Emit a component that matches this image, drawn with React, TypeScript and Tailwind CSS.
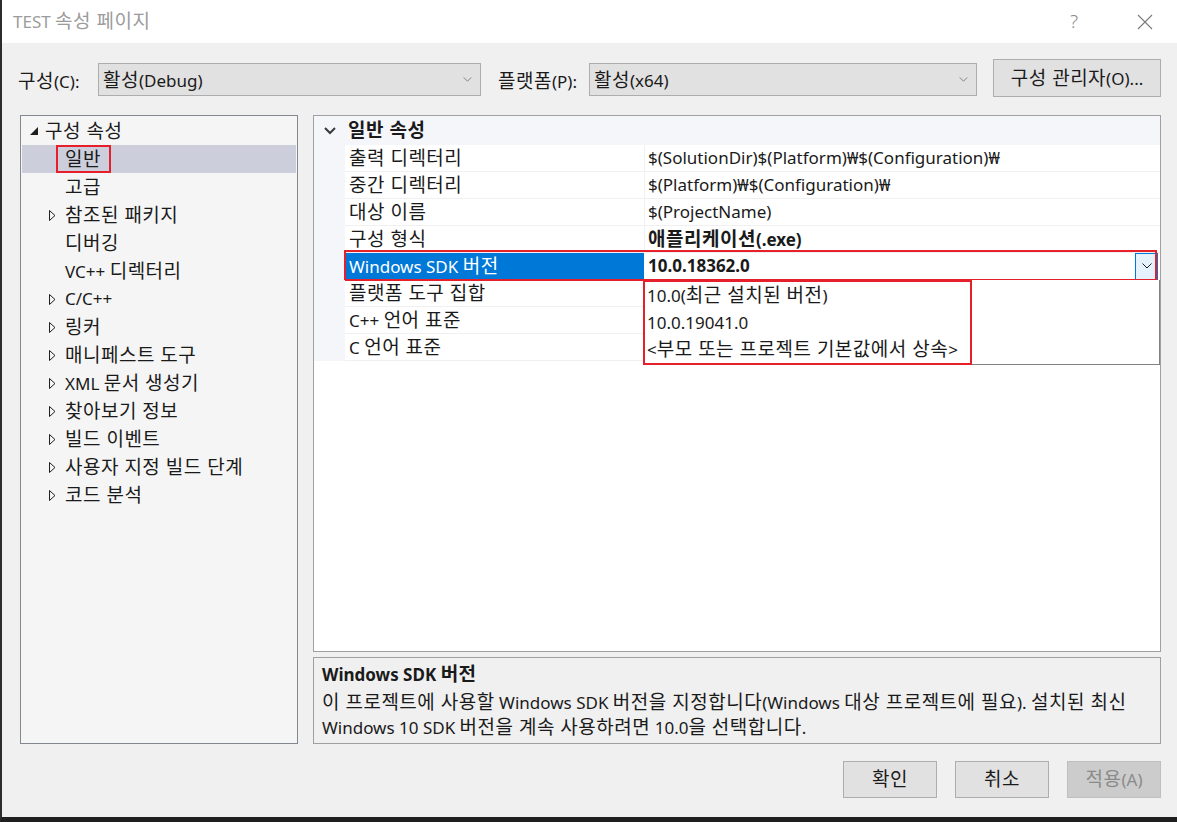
import React from 'react';

const FONT = "font-['Noto_Sans','Noto_Sans_CJK_KR',sans-serif]";

// Hangul runs are set a bit larger and looser so they take the width of the original UI font
const K = ({ t }: { t: string }) => (
  <span>
    {t.split(/([\uAC00-\uD7A3]+(?: [\uAC00-\uD7A3]+)*)/).map((part, i) =>
      /[\uAC00-\uD7A3]/.test(part) ? (
        <span key={i} className="text-[19px] tracking-[0.5px]">
          {part}
        </span>
      ) : (
        part
      )
    )}
  </span>
);

const Chevron = ({ className = '' }: { className?: string }) => (
  <svg viewBox="0 0 10 6" className={className} fill="none" stroke="currentColor" strokeWidth="1">
    <polyline points="0.5,0.5 5,5 9.5,0.5" />
  </svg>
);

const treeItems = [
  { label: '일반', arrow: false },
  { label: '고급', arrow: false },
  { label: '참조된 패키지', arrow: true },
  { label: '디버깅', arrow: false },
  { label: 'VC++ 디렉터리', arrow: false },
  { label: 'C/C++', arrow: true },
  { label: '링커', arrow: true },
  { label: '매니페스트 도구', arrow: true },
  { label: 'XML 문서 생성기', arrow: true },
  { label: '찾아보기 정보', arrow: true },
  { label: '빌드 이벤트', arrow: true },
  { label: '사용자 지정 빌드 단계', arrow: true },
  { label: '코드 분석', arrow: true },
];

const props = [
  { label: '출력 디렉터리', value: '$(SolutionDir)$(Platform)₩$(Configuration)₩', bold: false },
  { label: '중간 디렉터리', value: '$(Platform)₩$(Configuration)₩', bold: false },
  { label: '대상 이름', value: '$(ProjectName)', bold: false },
  { label: '구성 형식', value: '애플리케이션(.exe)', bold: true },
  { label: 'Windows SDK 버전', value: '10.0.18362.0', bold: true, selected: true },
  { label: '플랫폼 도구 집합', value: '', bold: false },
  { label: 'C++ 언어 표준', value: '', bold: false },
  { label: 'C 언어 표준', value: '', bold: false },
];

const options = ['10.0(최근 설치된 버전)', '10.0.19041.0', '<부모 또는 프로젝트 기본값에서 상속>'];

const Combo = ({ text, className }: { text: string; className: string }) => (
  <div className={`mt-[4px] flex h-[33px] items-center justify-between border border-[#adadad] bg-[#e1e1e1] pl-[4px] pr-[8px] ${className}`}>
    <span className="pt-[2px]">
      <K t={text} />
    </span>
    <Chevron className="h-[5px] w-[9px] text-[#707070]" />
  </div>
);

const TreeRow = ({ label, arrow, selected }: { label: string; arrow: boolean; selected?: boolean }) => (
  <div className={`mx-px flex h-[28px] items-center ${selected ? 'bg-[#cccedb]' : ''}`}>
    <div className="flex w-[43px] justify-end pr-[9px]">
      {arrow && (
        <svg viewBox="0 0 7 11" className="h-[11px] w-[7px]" fill="none" stroke="#1e1e1e" strokeWidth="1">
          <polygon points="0.5,0.5 6,5.5 0.5,10.5" />
        </svg>
      )}
    </div>
    {selected ? (
      <span className="ml-[-9px] flex h-[28px] items-center border-2 border-[#e5202b] pl-[7px] pr-[8px]">
        <K t={label} />
      </span>
    ) : (
      <K t={label} />
    )}
  </div>
);

const Button = ({ text, disabled }: { text: string; disabled?: boolean }) => (
  <div
    className={`flex h-[37px] w-[94px] items-center justify-center border ${
      disabled ? 'border-[#bfbfbf] bg-[#cccccc] text-[#8a8a8a]' : 'border-[#adadad] bg-[#e1e1e1] text-[#1a1a1a]'
    }`}
  >
    <K t={text} />
  </div>
);

export default function App() {
  return (
    <div className={`${FONT} flex h-[822px] w-[1177px] flex-col overflow-hidden border-b-[5px] border-l-2 border-b-[#1f1f1f] border-l-[#2d2d2d] bg-[#f0f0f0] text-[17px] text-[#1a1a1a]`}>
      {/* title bar */}
      <div className="flex h-[43px] shrink-0 items-center justify-between bg-white pl-[11px] pr-[24px]">
        <span className="text-[17px] text-[#9b9b9b]">
          <K t="TEST 속성 페이지" />
        </span>
        <div className="flex items-center gap-[59px] text-[#8a8a8a]">
          <span className="text-[19px] font-light">?</span>
          <svg viewBox="0 0 16 16" className="h-[16px] w-[16px]" stroke="#7a7a7a" strokeWidth="1.1">
            <line x1="1" y1="1" x2="15" y2="15" />
            <line x1="15" y1="1" x2="1" y2="15" />
          </svg>
        </div>
      </div>

      {/* config row */}
      <div className="mt-[16px] flex h-[38px] shrink-0 items-start pl-[16px] pr-[16px]">
        <span className="mt-[8px] w-[80px]">
          <K t="구성(C):" />
        </span>
        <Combo text="활성(Debug)" className="w-[383px]" />
        <span className="ml-[17px] mt-[8px] w-[91px]">
          <K t="플랫폼(P):" />
        </span>
        <Combo text="활성(x64)" className="w-[388px]" />
        <div className="ml-auto flex h-[38px] w-[168px] items-center justify-center border border-[#adadad] bg-[#e1e1e1]">
          <K t="구성 관리자(O)..." />
        </div>
      </div>

      {/* main */}
      <div className="mt-[18px] flex h-[629px] shrink-0 gap-[15px] pl-[18px] pr-[16px]">
        {/* tree */}
        <div className="w-[278px] border border-[#828790] bg-[#f5f5f5] pt-px">
          <div className="flex h-[28px] items-center">
            <div className="flex w-[24px] justify-end pr-[7px]">
              <svg viewBox="0 0 8 8" className="h-[8px] w-[8px]">
                <polygon points="8,0 8,8 0,8" fill="#1e1e1e" />
              </svg>
            </div>
            <K t="구성 속성" />
          </div>
          {treeItems.map((item, i) => (
            <TreeRow key={item.label} label={item.label} arrow={item.arrow} selected={i === 0} />
          ))}
        </div>

        {/* right column */}
        <div className="flex flex-1 flex-col gap-[5px]">
          {/* property grid */}
          <div className="h-[537px] border border-[#a0a0a0] bg-white">
            <div className="flex h-[29px] items-center bg-[#f4f6fa]">
              <div className="flex w-[31px] justify-center">
                <svg viewBox="0 0 12 8" className="h-[8px] w-[12px]" fill="none" stroke="#3a3a3a" strokeWidth="2">
                  <polyline points="1,1 6,6 11,1" />
                </svg>
              </div>
              <span className="pl-[3px] font-bold">
                <K t="일반 속성" />
              </span>
            </div>
            {props.map((p) => (
              <div key={p.label} className="relative flex h-[27px]">
                <div className="w-[31px] bg-[#f4f6fa]" />
                <div
                  className={`flex w-[299px] items-center border-b pl-[4px] ${
                    p.selected ? 'border-[#0078d7] bg-[#0078d7] text-white' : 'border-[#f0f0f0]'
                  }`}
                >
                  <K t={p.label} />
                </div>
                <div className={`flex flex-1 items-center border-b border-l pl-[3px] ${p.selected ? 'border-white' : 'border-[#f0f0f0]'}`}>
                  <span className={p.bold ? 'font-bold' : ''}>
                    <K t={p.value} />
                  </span>
                  {p.selected && (
                    <div className="ml-auto mr-[2px] flex h-[27px] w-[23px] items-center justify-center border border-[#0078d7] bg-[#e5f1fb]">
                      <Chevron className="h-[6px] w-[10px] text-[#1e1e1e]" />
                    </div>
                  )}
                </div>
                {p.selected && (
                  <>
                    <div className="pointer-events-none absolute bottom-[-1px] left-[30px] right-[3px] top-[-3px] border-2 border-[#e5202b]" />
                    <div className="absolute left-[329px] right-0 top-full z-10 h-[85px] border border-t-0 border-[#828282] bg-white">
                      <div className="ml-[-1px] w-[329px] border-2 border-[#e5202b] pl-[2px]">
                        {options.map((o) => (
                          <div key={o} className="flex h-[27px] items-center">
                            <K t={o} />
                          </div>
                        ))}
                      </div>
                    </div>
                  </>
                )}
              </div>
            ))}
          </div>

          {/* description */}
          <div className="h-[87px] border border-[#a0a0a0] bg-[#f0f0f0] pl-[8px] pt-[4px] leading-[25px]">
            <div className="mb-[3px] font-bold">
              <K t="Windows SDK 버전" />
            </div>
            <div>
              <K t="이 프로젝트에 사용할 Windows SDK 버전을 지정합니다(Windows 대상 프로젝트에 필요). 설치된 최신" />
            </div>
            <div>
              <K t="Windows 10 SDK 버전을 계속 사용하려면 10.0을 선택합니다." />
            </div>
          </div>
        </div>
      </div>

      {/* buttons */}
      <div className="mt-[17px] flex justify-end gap-[18px] pr-[16px]">
        <Button text="확인" />
        <Button text="취소" />
        <Button text="적용(A)" disabled />
      </div>
    </div>
  );
}
